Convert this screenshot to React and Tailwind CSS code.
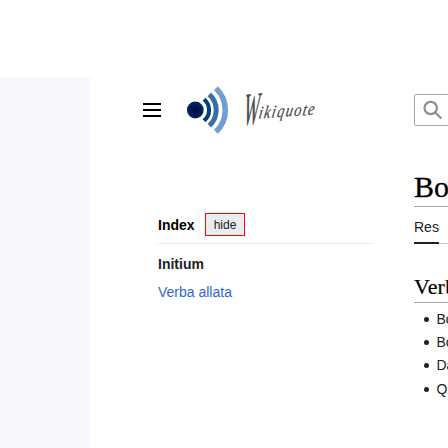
import React from "react";

function Logo() {
  return (
    <svg width="132" height="52" viewBox="0 0 132 52" className="ml-[25px] shrink-0">
      <defs>
        <radialGradient id="dot">
          <stop offset="0" stopColor="#000040" />
          <stop offset="1" stopColor="#002a66" />
        </radialGradient>
      </defs>
      <circle cx="9.3" cy="26" r="8.4" fill="url(#dot)" />
      <g fill="none">
        <path d="M18 15.2A14 14 0 0 1 18 36.8" stroke="#003f7d" strokeWidth="4" />
        <path d="M23.3 10.3A21.3 21.3 0 0 1 23.3 41.7" stroke="#3a6fa5" strokeWidth="5" />
        <path d="M29.9 4.2A30 30 0 0 1 29.9 47.8" stroke="#729fcf" strokeWidth="5.6" />
      </g>
      <g fill="#4a4a4a" className="font-['Liberation_Serif',serif] italic">
        <text transform="translate(57 41) rotate(-6) skewX(-10) scale(.42 1)" fontSize="45" stroke="#4a4a4a" strokeWidth=".4">W</text>
        <text transform="translate(72 34.5) rotate(-4) skewX(-14) scale(.82 1)" fontSize="17.5" stroke="#4a4a4a" strokeWidth=".2" textLength="68" lengthAdjust="spacing">ikiquote</text>
      </g>
    </svg>
  );
}

const items = ["Boethius", "Boni", "Data", "Quae"];

export default function App() {
  return (
    <div className="flex h-[448px] w-[448px] flex-col overflow-hidden bg-white pt-[77px] font-['Liberation_Sans',Arial,sans-serif] text-sm text-[#202122]">
      <div className="flex flex-1">
        <div className="w-[90px] shrink-0 bg-[#f6f8fb]" />
        <div className="w-[324px] shrink-0 pl-[53px] pt-[7px]">
          <div className="flex h-[52px] items-center">
            <div className="flex w-[18px] flex-col gap-1">
              <div className="h-0.5 bg-black" />
              <div className="h-0.5 bg-black" />
              <div className="h-0.5 bg-black" />
            </div>
            <Logo />
          </div>
          <nav className="ml-[15px] mt-[77px] w-[216px]">
            <div className="flex h-[31px] items-start border-b border-[#eaecf0]">
              <h2 className="w-[47px] font-bold leading-[24px] text-black">Index</h2>
              <button className="h-[23px] w-10 border border-[#ff0000] bg-[#eaecf0] text-xs leading-[22px]">hide</button>
            </div>
            <div className="mt-[9px] font-bold leading-[22px]">Initium</div>
            <a className="mt-[6px] block leading-[22px] text-[#3366cc]">Verba allata</a>
          </nav>
        </div>
        <main className="w-[34px] shrink-0 overflow-hidden pt-[17px]">
          <div className="h-8 w-[200px] rounded-[2px] border border-[#a2a9b1]">
            <svg width="32" height="30" viewBox="0 0 32 30" fill="none" stroke="#8c8e92" strokeWidth="2.2">
              <circle cx="15.7" cy="13" r="6.2" />
              <path d="M20 17.3L26.4 23.5" />
            </svg>
          </div>
          <h1 className="mt-[42px] h-[39px] w-[200px] border-b border-[#a2a9b1] font-['Liberation_Serif',serif] text-[30px] leading-[37px] text-black [-webkit-text-stroke:0.3px_black]">Boethius</h1>
          <div className="flex h-[37px] w-[200px] border-b border-[#c8ccd1]">
            <div className="h-[37px] border-b-2 border-[#202122] pt-[9px] leading-[22px]">Res</div>
          </div>
          <h2 className="mt-[28px] h-[31px] w-[200px] border-b border-[#a2a9b1] font-['Liberation_Serif',serif] text-[22px] leading-[30px] tracking-[0.2px] text-black [-webkit-text-stroke:0.2px_black]">Verba</h2>
          <ul className="mt-[4px]">
            {items.map((t) => (
              <li key={t} className="flex h-[23.3px] items-center whitespace-nowrap">
                <span className="ml-[10px] mr-[7.5px] mt-px h-[5px] w-[5px] shrink-0 rounded-full bg-[#202122]" />
                {t}
              </li>
            ))}
          </ul>
        </main>
      </div>
    </div>
  );
}
